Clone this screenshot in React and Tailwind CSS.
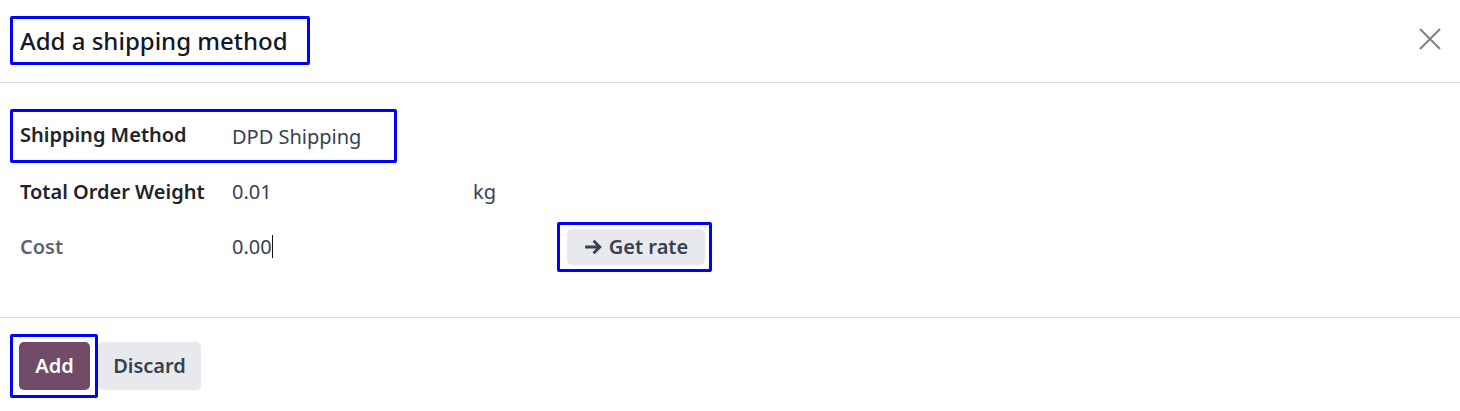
import React from 'react';

const font = { fontFamily: '"Noto Sans", "Open Sans", sans-serif' };

const Row = ({ label, muted, children, extra }) => (
  <div className="flex items-center h-[55px] pt-[2px]">
    <div className={`w-[222px] pl-[10px] text-[20px] font-semibold ${muted ? 'text-[#5f6470]' : 'text-[#1f2328]'}`}>{label}</div>
    <div className="w-[241px] text-[20px] text-[#374151]">{children}</div>
    {extra}
  </div>
);

const App = () => {
  return (
    <div className="w-[1460px] h-[411px] bg-white flex flex-col" style={font}>
      {/* Header */}
      <div className="h-[83px] border-b border-[#d8dadd] flex items-start justify-between">
        <div className="mt-[16px] ml-[10px] w-[300px] h-[49px] border-[3px] border-[#0000ff] rounded-[2px] flex items-center pl-[7px]">
          <h4 className="text-[24px] font-medium text-[#111827] leading-none">Add a shipping method</h4>
        </div>
        <button className="mt-[28px] mr-[19px] w-[22px] h-[22px] text-[#808080]">
          <svg viewBox="0 0 22 22" width="22" height="22" fill="none" stroke="currentColor" strokeWidth="2">
            <path d="M1 1 L21 21 M21 1 L1 21" />
          </svg>
        </button>
      </div>

      {/* Body */}
      <div className="h-[235px] border-b border-[#d8dadd] pt-[26px] px-[10px]">
        <div className="w-[387px] h-[54px] border-[3px] border-[#0000ff] rounded-[2px] flex items-center">
          <div className="w-[219px] pl-[7px] text-[20px] font-semibold text-[#1f2328] -mt-[2px]">Shipping Method</div>
          <div className="text-[20px] text-[#374151] mt-[1px]">DPD Shipping</div>
        </div>
        <Row label="Total Order Weight" extra={<div className="text-[20px] text-[#374151]">kg</div>}>0.01</Row>
        <Row
          label="Cost"
          muted
          extra={
            <div className="ml-[84px] w-[155px] h-[50px] border-[3px] border-[#0000ff] rounded-[2px] flex items-center pl-[7px]">
              <button className="h-[36px] w-[138px] justify-center bg-[#e7e9ed] rounded-[5px] text-[20px] font-semibold text-[#374151] flex items-center gap-[7px]">
                <svg viewBox="0 0 16 16" width="18" height="18" fill="none" stroke="currentColor" strokeWidth="2.6">
                  <path d="M1 8 H14 M8.5 2.5 L14 8 L8.5 13.5" />
                </svg>
                Get rate
              </button>
            </div>
          }
        >
          <span>0.00</span><span className="inline-block w-[1.5px] h-[23px] bg-[#111] align-middle -mt-[3px]" />
        </Row>
      </div>

      {/* Footer */}
      <div className="flex items-center pl-[10px] pt-[16px]">
        <div className="w-[88px] h-[64px] border-[3px] border-[#0000ff] rounded-[2px] flex items-center pl-[6px]">
          <button className="w-[71px] h-[48px] bg-[#714b67] rounded-[5px] text-white text-[20px] font-semibold">Add</button>
        </div>
        <button className="h-[48px] w-[103px] bg-[#e7e9ed] rounded-[5px] text-[#374151] text-[20px] font-semibold">Discard</button>
      </div>
    </div>
  );
};

export default App;
